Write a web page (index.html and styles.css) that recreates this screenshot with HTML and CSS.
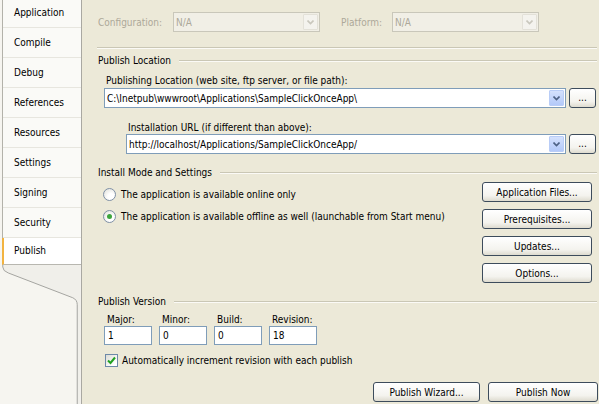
FILE: index.html
```html
<!DOCTYPE html>
<html lang="en">
<head>
  <meta charset="UTF-8" />
  <title>Publish</title>
  <link rel="stylesheet" href="styles.css">
</head>
<body>
  <div class="window">
    <nav class="sidebar">
      <ul class="tabs">
        <li>Application</li>
        <li>Compile</li>
        <li>Debug</li>
        <li>References</li>
        <li>Resources</li>
        <li>Settings</li>
        <li>Signing</li>
        <li>Security</li>
        <li class="active">Publish</li>
      </ul>
      <svg class="tail" width="82" height="140" viewBox="0 0 82 140">
        <path d="M77.5,40 Q77.5,35 73,33 L8,8 Q2.5,6 2.5,2 V0 H81 V140 H77.5 Z" fill="#f0efea" />
        <path d="M2.5,0 V2 Q2.5,6 8,8 L73,33 Q77.5,35 77.5,40 V140" fill="none" stroke="#a4a4a0" stroke-width="1" />
      </svg>
    </nav>

    <main class="props">
      <div class="config-row">
        <span class="config-label">Configuration:</span>
        <div class="combo disabled config-combo">
          <span class="combo-text">N/A</span>
          <span class="drop"><svg width="7" height="5" viewBox="0 0 7 5"><polyline points="0.5,0.5 3.5,3.5 6.5,0.5" fill="none" stroke="currentColor" stroke-width="1.6" /></svg></span>
        </div>
        <span class="config-label platform">Platform:</span>
        <div class="combo disabled config-combo">
          <span class="combo-text">N/A</span>
          <span class="drop"><svg width="7" height="5" viewBox="0 0 7 5"><polyline points="0.5,0.5 3.5,3.5 6.5,0.5" fill="none" stroke="currentColor" stroke-width="1.6" /></svg></span>
        </div>
      </div>

      <div class="sep"></div>

      <div class="group-title"><span>Publish Location</span></div>
      <div class="field-label loc-label">Publishing Location (web site, ftp server, or file path):</div>
      <div class="path-row loc-row">
        <div class="combo">
          <span class="combo-text">C:\Inetpub\wwwroot\Applications\SampleClickOnceApp\</span>
          <span class="drop"><svg width="7" height="5" viewBox="0 0 7 5"><polyline points="0.5,0.5 3.5,3.5 6.5,0.5" fill="none" stroke="currentColor" stroke-width="1.6" /></svg></span>
        </div>
        <button class="btn browse">...</button>
      </div>

      <div class="field-label url-label">Installation URL (if different than above):</div>
      <div class="path-row url-row">
        <div class="combo">
          <span class="combo-text">http://localhost/Applications/SampleClickOnceApp/</span>
          <span class="drop"><svg width="7" height="5" viewBox="0 0 7 5"><polyline points="0.5,0.5 3.5,3.5 6.5,0.5" fill="none" stroke="currentColor" stroke-width="1.6" /></svg></span>
        </div>
        <button class="btn browse">...</button>
      </div>

      <div class="group-title install-title"><span>Install Mode and Settings</span></div>
      <div class="install">
        <div class="modes">
          <label class="radio-row"><span class="radio"></span>The application is available online only</label>
          <label class="radio-row"><span class="radio checked"></span>The application is available offline as well (launchable from Start menu)</label>
        </div>
        <div class="side-buttons">
          <button class="btn">Application Files...</button>
          <button class="btn">Prerequisites...</button>
          <button class="btn">Updates...</button>
          <button class="btn">Options...</button>
        </div>
      </div>

      <div class="group-title version-title"><span>Publish Version</span></div>
      <div class="version">
        <div class="part"><span>Major:</span><div class="textbox">1</div></div>
        <div class="part"><span>Minor:</span><div class="textbox">0</div></div>
        <div class="part"><span>Build:</span><div class="textbox">0</div></div>
        <div class="part"><span>Revision:</span><div class="textbox">18</div></div>
      </div>
      <label class="check-row">
        <span class="checkbox"><svg width="9" height="9" viewBox="0 0 9 9"><polyline points="1,4.5 3.5,7 8,1.5" fill="none" stroke="#21a121" stroke-width="2" /></svg></span>
        Automatically increment revision with each publish
      </label>

      <div class="bottom-buttons">
        <button class="btn wizard">Publish Wizard...</button>
        <button class="btn now">Publish Now</button>
      </div>
    </main>
  </div>
</body>
</html>
```

FILE: styles.css
```css
html, body {
  margin: 0;
  padding: 0;
  width: 599px;
  height: 404px;
  overflow: hidden;
  font-family: "DejaVu Sans Condensed", "DejaVu Sans", sans-serif;
  font-size: 10px;
  color: #000;
  background: #ece9d8;
}

.window {
  display: flex;
  height: 404px;
}

/* left tab strip */

.sidebar {
  width: 81px;
  flex-shrink: 0;
  background: #f6f5f0;
  border-right: 1px solid #a9a8a2;
  display: flex;
  flex-direction: column;
  overflow: hidden;
}

.tabs {
  list-style: none;
  margin: -2px 0 0 2px;
  padding: 0;
  border-left: 1px solid #b3b2aa;
}

.tabs li {
  height: 29px;
  line-height: 29px;
  padding-left: 11px;
  background: #fafaf7;
  border-bottom: 1px solid #e7e6df;
}

.tabs li.active {
  height: 26px;
  line-height: 26px;
  background: #fff;
  border-left: 2px solid #f2b340;
  margin-left: -1px;
  padding-left: 10px;
  border-bottom: 1px solid #b8b7b0;
}

.tail {
  display: block;
  flex: 1;
}

/* property page */

.props {
  flex: 1;
  padding: 0 2px 0 15px;
}

.config-row {
  display: flex;
  align-items: center;
  margin-top: 13px;
  height: 18px;
  color: #aca899;
}

.config-label {
  width: 76px;
  padding-left: 1px;
  box-sizing: border-box;
}

.config-label.platform {
  width: 52px;
  margin-left: 20px;
}

.config-combo {
  width: 147px;
  height: 18px;
}

.sep {
  margin-top: 16px;
  height: 0;
  border-top: 1px solid #cac7b5;
  border-bottom: 1px solid #fbfaf6;
}

.group-title {
  display: flex;
  align-items: center;
  margin-top: 5px;
  height: 13px;
  padding-left: 1px;
}

.group-title::after {
  content: "";
  flex: 1;
  margin-left: 8px;
  border-top: 1px solid #cac7b5;
  border-bottom: 1px solid #fbfaf6;
}

.field-label {
  height: 13px;
  line-height: 13px;
}

.loc-label {
  margin: 7px 0 1px 9px;
}

.url-label {
  margin: 13px 0 0 31px;
}

.path-row {
  display: flex;
  align-items: flex-start;
  gap: 3px;
  margin-right: 1px;
}

.loc-row {
  margin-left: 7px;
}

.url-row {
  margin-left: 29px;
}

.path-row .combo {
  flex: 1;
}

.combo {
  display: flex;
  align-items: center;
  height: 20px;
  box-sizing: border-box;
  border: 1px solid #7f9db9;
  background: #fff;
}

.combo-text {
  flex: 1;
  padding-left: 2px;
  white-space: nowrap;
  overflow: hidden;
}

.drop {
  display: flex;
  align-items: center;
  justify-content: center;
  width: 15px;
  align-self: stretch;
  margin: 1px;
  border: 1px solid #b9cdf7;
  border-radius: 1px;
  box-sizing: border-box;
  background: linear-gradient(#d4e1fd, #b3c9f9);
  color: #4d6185;
}

.combo.disabled {
  border-color: #c9c7ba;
  background: #f1efe6;
}

.combo.disabled .drop {
  border-color: #e3e1d8;
  background: #f4f3ee;
  color: #c9c7bd;
}

.btn {
  font: inherit;
  color: #000;
  height: 20px;
  padding: 0;
  border: 1px solid #3d4c5c;
  border-radius: 3px;
  background: linear-gradient(#ffffff, #f4f3ee 70%, #dedbcf);
  box-sizing: border-box;
}

.browse {
  width: 27px;
  line-height: 1;
}

.install-title {
  margin-top: 12px;
}

.install {
  display: flex;
  align-items: flex-start;
}

.modes {
  flex: 1;
  display: flex;
  flex-direction: column;
  gap: 6px;
  margin: 7px 0 0 6px;
}

.radio-row {
  display: flex;
  align-items: center;
  height: 16px;
  gap: 5px;
}

.radio {
  width: 13px;
  height: 13px;
  box-sizing: border-box;
  border: 1px solid #7f90a6;
  border-radius: 50%;
  background: radial-gradient(circle at 65% 70%, #ffffff 30%, #dcdcd5);
  display: flex;
  align-items: center;
  justify-content: center;
}

.radio.checked::after {
  content: "";
  width: 5px;
  height: 5px;
  border-radius: 50%;
  background: #3da53d;
}

.side-buttons {
  display: flex;
  flex-direction: column;
  gap: 7px;
  margin: 3px 5px 0 0;
}

.side-buttons .btn {
  width: 110px;
}

.version-title {
  margin-top: 12px;
}

.version {
  display: flex;
  gap: 7px;
  margin: 6px 0 0 7px;
}

.part span {
  display: block;
  height: 12px;
  line-height: 12px;
  padding-left: 3px;
}

.textbox {
  width: 48px;
  height: 19px;
  line-height: 17px;
  box-sizing: border-box;
  border: 1px solid #7f9db9;
  background: #fff;
  padding-left: 3px;
}

.check-row {
  display: flex;
  align-items: center;
  gap: 4px;
  height: 16px;
  margin: 7px 0 0 8px;
}

.checkbox {
  width: 13px;
  height: 13px;
  box-sizing: border-box;
  border: 1px solid #6d89a8;
  background: linear-gradient(135deg, #dcdcd5, #ffffff 80%);
  display: flex;
  align-items: center;
  justify-content: center;
}

.bottom-buttons {
  display: flex;
  justify-content: flex-end;
  gap: 8px;
  margin: 14px -1px 0 0;
}

.wizard {
  width: 107px;
}

.now {
  width: 110px;
}
```
